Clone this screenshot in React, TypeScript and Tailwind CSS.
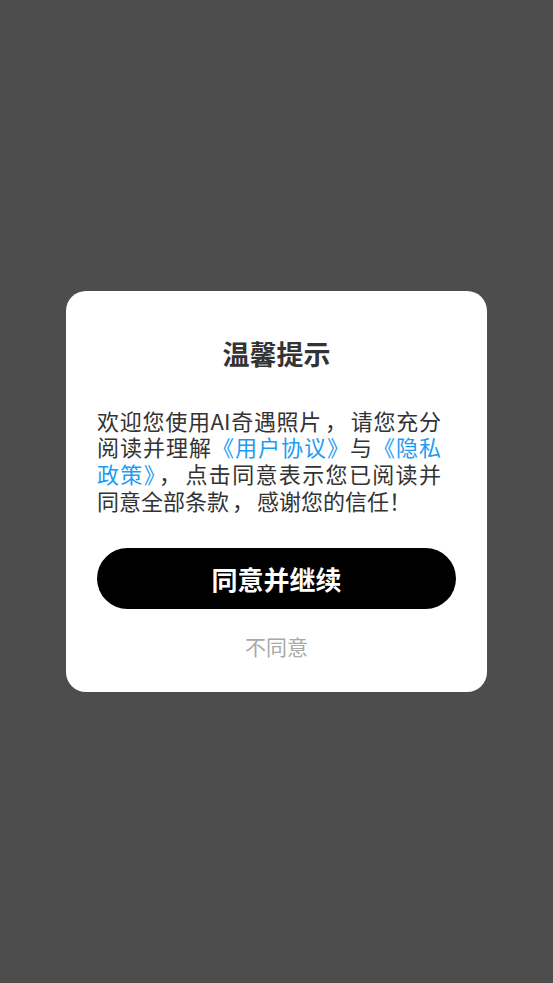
import React from "react"

const font = { fontFamily: '"Noto Sans CJK SC", "Noto Sans", sans-serif' }

// 原图里的全角逗号前后留白稍宽
function Comma() {
  return <span className="ml-[3px] tracking-[3px]">，</span>
}

function Link({ children }: { children: React.ReactNode }) {
  return <span className="text-[#1c9cf3]">{children}</span>
}

function Line({ children, last }: { children: React.ReactNode; last?: boolean }) {
  return (
    <span className={last ? "block whitespace-nowrap" : "block whitespace-nowrap text-justify [text-align-last:justify]"}>
      {children}
    </span>
  )
}

export default function App() {
  return (
    <div className="min-h-screen bg-[#4d4d4d] flex items-center justify-center" style={font}>
      <div className="w-[421px] bg-white rounded-[20px] px-[31px] pt-[45px] pb-[31px] flex flex-col">
        <h1 className="text-center text-[27px] leading-[36px] font-bold text-[#333333]">温馨提示</h1>

        <p className="mt-[35px] w-[344px] text-[22px] leading-[26.7px] text-[#333333]">
          <Line>
            欢迎您使用AI奇遇照片<Comma />请您充分
          </Line>
          <Line>
            阅读并理解<Link>《用户协议》</Link>与<Link>《隐私</Link>
          </Line>
          <Line>
            <Link>政策》</Link><Comma />点击同意表示您已阅读并
          </Line>
          <Line last>
            同意全部条款<Comma />感谢您的信任！
          </Line>
        </p>

        <button className="mt-[35px] h-[61px] w-full rounded-full bg-black text-white text-[26px] font-bold leading-[61px]">
          同意并继续
        </button>

        <button className="mt-[22px] text-[21px] leading-[30px] text-[#a9a9a9]">不同意</button>
      </div>
    </div>
  )
}
